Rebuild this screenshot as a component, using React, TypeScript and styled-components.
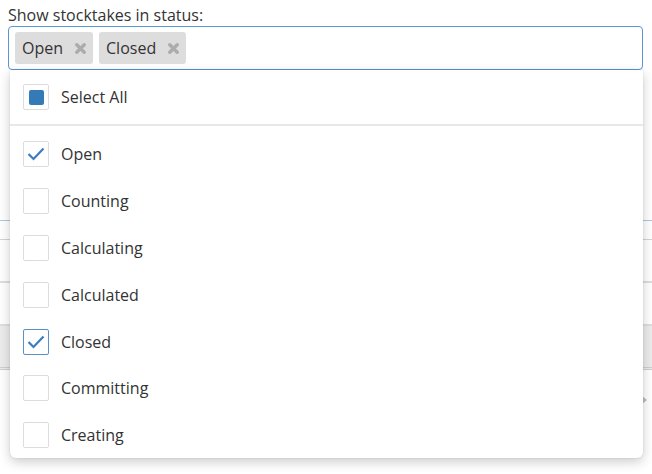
import styled, { createGlobalStyle } from "styled-components";

const GlobalStyle = createGlobalStyle`
  html, body {
    margin: 0;
    background: #fff;
    font-family: "Open Sans", "Noto Sans", sans-serif;
    color: #333;
  }
`;

const statuses = [
  { label: "Open", checked: true },
  { label: "Counting", checked: false },
  { label: "Calculating", checked: false },
  { label: "Calculated", checked: false },
  { label: "Closed", checked: true, focused: true },
  { label: "Committing", checked: false },
  { label: "Creating", checked: false },
];

const Page = styled.div`
  position: relative;
  height: 474px;
  overflow: hidden;
`;

const Filter = styled.div`
  padding: 4px 9px 0 8px;
`;

const Label = styled.div`
  font-size: 16px;
  line-height: 22px;
  color: #333;
`;

const SelectBox = styled.div`
  height: 42px;
  border: 1px solid #5b96cf;
  border-radius: 4px;
  display: flex;
  align-items: center;
  gap: 6px;
  padding: 0 6px;
  box-sizing: content-box;
`;

const Chip = styled.div`
  height: 32px;
  display: flex;
  align-items: center;
  gap: 12px;
  padding: 0 7px 0 7px;
  background: #dddddd;
  border-radius: 3px;
  font-size: 16px;
`;

const ChipClose = () => (
  <svg width="11" height="11" viewBox="0 0 11 11">
    <path d="M1.8 1.8 L9.2 9.2 M9.2 1.8 L1.8 9.2" stroke="#acacac" strokeWidth="3.4" strokeLinecap="round" />
  </svg>
);

const Table = styled.div`
  margin-top: 150px;
`;

const TableHead = styled.div`
  height: 18px;
  border-top: 1px solid #a9c9e8;
  border-bottom: 1px solid #d4d4d4;
`;

const TableRow = styled.div<{ $shaded?: boolean; $double?: boolean }>`
  height: 41px;
  background: ${(p) => (p.$shaded ? "#ececec" : "transparent")};
  border-bottom: ${(p) => (p.$double ? "3px double #cfcfcf" : "2px solid #dedede")};
`;

const Pager = styled.div`
  display: flex;
  justify-content: flex-end;
  padding: 26px 5px 0 0;
`;

const PagerArrow = () => (
  <svg width="5" height="8" viewBox="0 0 5 8">
    <path d="M0 0 L5 4 L0 8 Z" fill="#bdbdbd" />
  </svg>
);

const Dropdown = styled.div`
  position: absolute;
  top: 70px;
  left: 10px;
  width: 633px;
  height: 388px;
  background: #fff;
  border-radius: 0 0 6px 6px;
  box-shadow: 0 4px 12px rgba(0, 0, 0, 0.2), 0 0 2px rgba(0, 0, 0, 0.12);
  overflow: hidden;
`;

const SelectAllRow = styled.div`
  height: 54px;
  display: flex;
  align-items: center;
  gap: 12px;
  padding-left: 13px;
  border-bottom: 2px solid #e8e8e8;
`;

const List = styled.div`
  padding-top: 5px;
`;

const Option = styled.div`
  height: 46.8px;
  display: flex;
  align-items: center;
  gap: 12px;
  padding-left: 13px;
`;

const Box = styled.div<{ $focused?: boolean }>`
  width: 24px;
  height: 24px;
  border: 1px solid ${(p) => (p.$focused ? "#5b8fc7" : "#dcdcdc")};
  border-radius: 2px;
  display: flex;
  align-items: center;
  justify-content: center;
  flex: none;
`;

const Fill = styled.div`
  width: 15px;
  height: 15px;
  background: #337ab7;
  border-radius: 2px;
`;

const OptionText = styled.span`
  font-size: 16px;
  color: #333;
`;

const Check = () => (
  <svg width="18" height="14" viewBox="0 0 18 14">
    <path d="M1.5 7 L6.5 12 L16.5 1.5" fill="none" stroke="#3b7cc0" strokeWidth="2.2" />
  </svg>
);

export default function App() {
  return (
    <Page>
      <GlobalStyle />
      <Filter>
        <Label>Show stocktakes in status:</Label>
        <SelectBox>
          <Chip>
            Open <ChipClose />
          </Chip>
          <Chip>
            Closed <ChipClose />
          </Chip>
        </SelectBox>
      </Filter>
      <Table>
        <TableHead />
        <TableRow />
        <TableRow />
        <TableRow $shaded $double />
        <Pager>
          <PagerArrow />
        </Pager>
      </Table>
      <Dropdown>
        <SelectAllRow>
          <Box>
            <Fill />
          </Box>
          <OptionText>Select All</OptionText>
        </SelectAllRow>
        <List>
          {statuses.map((s) => (
            <Option key={s.label}>
              <Box $focused={s.focused}>{s.checked && <Check />}</Box>
              <OptionText>{s.label}</OptionText>
            </Option>
          ))}
        </List>
      </Dropdown>
    </Page>
  );
}
